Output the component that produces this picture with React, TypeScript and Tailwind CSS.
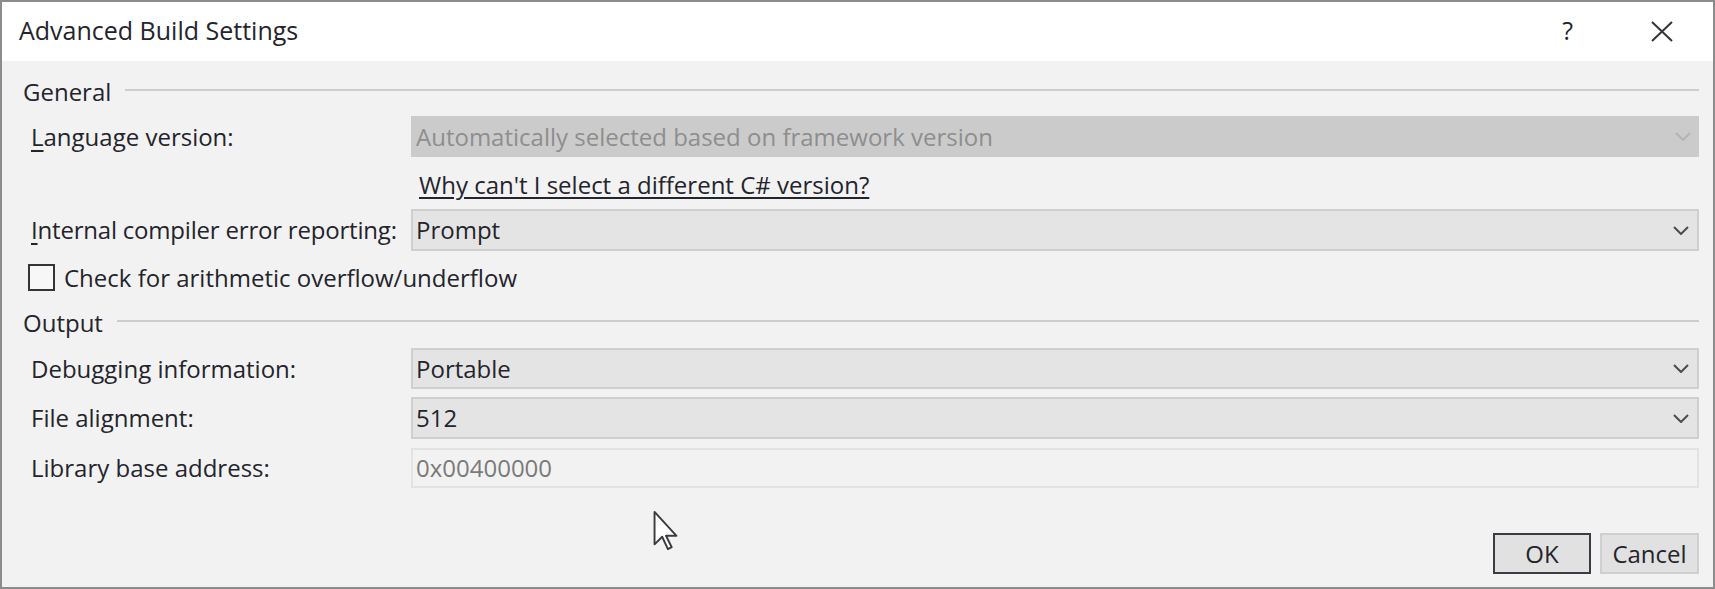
import React from "react";

function Chevron({ faint }: { faint?: boolean }) {
  return (
    <svg width="16" height="9" viewBox="0 0 16 9" className="shrink-0">
      <path
        d="M1 1 L8 8 L15 1"
        fill="none"
        stroke={faint ? "#b4b4b4" : "#4a4a52"}
        strokeWidth="2"
      />
    </svg>
  );
}

function Heading({ title }: { title: string }) {
  return (
    <div className="flex items-center h-[30px] gap-[14px]">
      <span className="text-[#24242c]">{title}</span>
      <div className="flex-1 h-[2px] bg-[#cdcdcd] mb-[4px]" />
    </div>
  );
}

function Row({
  label,
  children,
  className,
}: {
  label: React.ReactNode;
  children: React.ReactNode;
  className?: string;
}) {
  return (
    <div className={"flex items-center " + (className ?? "")}>
      <div className="w-[388px] pl-[8px] text-[#24242c] shrink-0">{label}</div>
      {children}
    </div>
  );
}

function Select({ value, className }: { value: string; className?: string }) {
  return (
    <div
      className={
        "flex-1 flex items-center justify-between border-2 border-[#cfcfcf] bg-[#e4e4e4] pl-[3px] pr-[8px] text-[#24242c] " +
        (className ?? "")
      }
    >
      <span>{value}</span>
      <Chevron />
    </div>
  );
}

export default function App() {
  return (
    <div className="relative w-[1715px] h-[589px] border-2 border-[#8c8c8c] bg-[#f2f2f2] flex flex-col font-['Open_Sans',sans-serif] text-[24px] leading-none">
      {/* title bar */}
      <div className="h-[59px] bg-white flex items-center pl-[17px] pr-[40px]">
        <span className="text-[#24242c] text-[25px] pb-[2px]">Advanced Build Settings</span>
        <div className="flex-1" />
        <span className="text-[#24242c] text-[25px] mr-[78px] pb-[2px]">?</span>
        <svg width="22" height="21" viewBox="0 0 22 21">
          <path d="M1 1 L21 20 M21 1 L1 20" stroke="#33333b" strokeWidth="2" fill="none" />
        </svg>
      </div>

      {/* body */}
      <div className="flex-1 flex flex-col pl-[21px] pr-[14px] pt-[16px]">
        <Heading title="General" />

        <Row
          className="mt-[9px]"
          label={
            <span>
              <span className="underline underline-offset-4">L</span>anguage version:
            </span>
          }
        >
          <div className="flex-1 h-[41px] flex items-center justify-between bg-[#cbcbcb] pl-[5px] pr-[8px] text-[#8e8e8e]">
            <span>Automatically selected based on framework version</span>
            <Chevron faint />
          </div>
        </Row>

        <div className="h-[52px] flex items-center pl-[396px] pt-[4px]">
          <a className="text-[#24242c] underline underline-offset-[3px] cursor-pointer">
            Why can't I select a different C# version?
          </a>
        </div>

        <Row
          label={
            <span className="tracking-[-0.2px]">
              <span className="underline underline-offset-4">I</span>nternal compiler error reporting:
            </span>
          }
        >
          <Select value="Prompt" className="h-[42px]" />
        </Row>

        <div className="mt-[13px] h-[27px] flex items-center gap-[9px] pl-[5px]">
          <div className="w-[27px] h-[27px] border-2 border-[#333339] bg-[#f7f7f7]" />
          <span className="text-[#24242c]">Check for arithmetic overflow/underflow</span>
        </div>

        <div className="mt-[17px]">
          <Heading title="Output" />
        </div>

        <Row className="mt-[10px]" label="Debugging information:">
          <Select value="Portable" className="h-[41px]" />
        </Row>
        <Row className="mt-[8px]" label="File alignment:">
          <Select value="512" className="h-[42px]" />
        </Row>
        <Row className="mt-[9px]" label="Library base address:">
          <div className="flex-1 h-[40px] flex items-center border-2 border-[#e3e3e3] bg-[#f2f2f2] pl-[3px] text-[#7a7a7a]">
            0x00400000
          </div>
        </Row>

        <div className="mt-[45px] flex justify-end gap-[9px]">
          <button className="w-[98px] h-[41px] border-2 border-[#3c3c44] bg-[#e1e1e1] text-[#24242c]">
            OK
          </button>
          <button className="w-[99px] h-[41px] border-2 border-[#cfcfcf] bg-[#e1e1e1] text-[#24242c]">
            Cancel
          </button>
        </div>
      </div>

      {/* mouse pointer */}
      <svg
        className="absolute left-[650px] top-[508px]"
        width="28"
        height="42"
        viewBox="0 0 28 44"
      >
        <path
          d="M2 2 L2 36 L10 28 L16 41 L20 39 L14 27 L25 27 Z"
          fill="#ffffff"
          stroke="#3a3a40"
          strokeWidth="2"
          strokeLinejoin="round"
        />
      </svg>
    </div>
  );
}
